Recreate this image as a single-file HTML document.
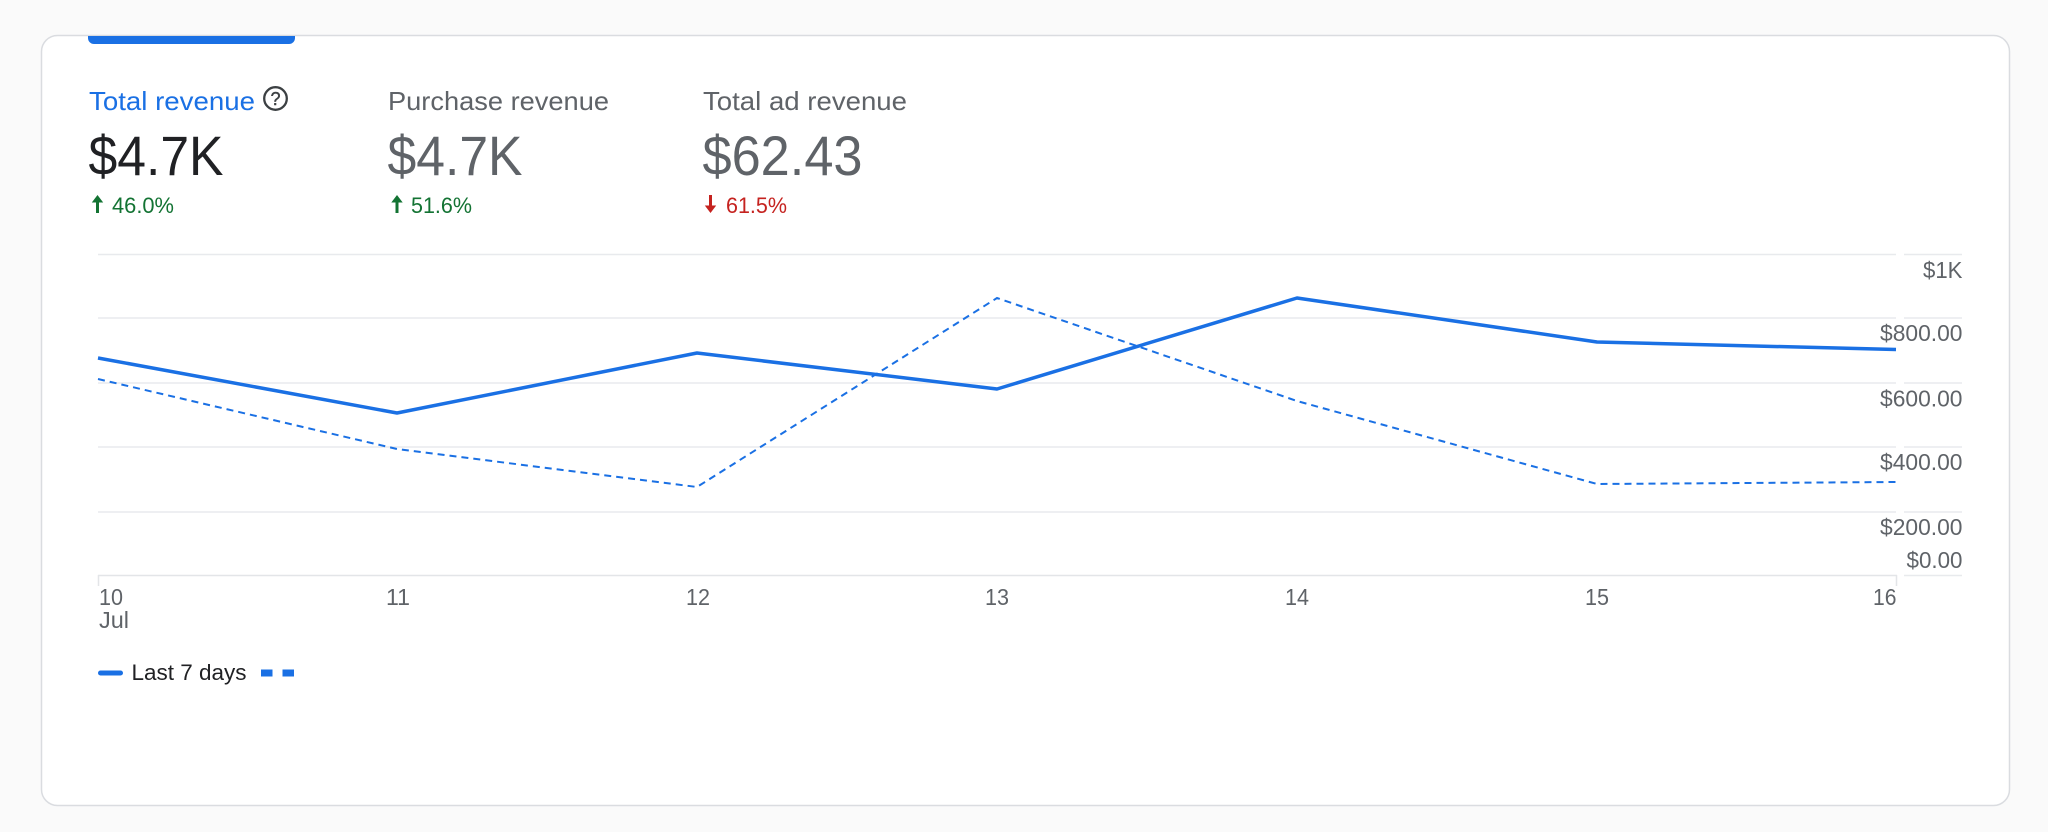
<!DOCTYPE html>
<html><head><meta charset="utf-8"><style>
html,body{margin:0;padding:0;background:#fafafa;width:2048px;height:832px;overflow:hidden}
svg{display:block}
text{font-family:"Liberation Sans",sans-serif}
.ax{font-size:23px;fill:#5f6368}
</style></head><body>
<svg width="2048" height="832" viewBox="0 0 2048 832" xmlns="http://www.w3.org/2000/svg">
<rect width="2048" height="832" fill="#fafafa"/>
<rect x="41.5" y="35.5" width="1968" height="770" rx="16" fill="#fff" stroke="#dadce0" stroke-width="1.5"/>
<path d="M88 36H295V38a6 6 0 0 1-6 6H94a6 6 0 0 1-6-6Z" fill="#1a70e4"/>

<text x="89" y="110" font-size="26" fill="#1a70e4" textLength="166" lengthAdjust="spacingAndGlyphs">Total revenue</text>
<circle cx="275.500" cy="98.500" r="11.300" fill="none" stroke="#3c4043" stroke-width="2.300"/>
<text x="275.500" y="105" font-size="18" fill="#3c4043" stroke="#3c4043" stroke-width="0.400" text-anchor="middle">?</text>
<text x="388" y="110" font-size="26" fill="#5f6368" textLength="221" lengthAdjust="spacingAndGlyphs">Purchase revenue</text>
<text x="703" y="110" font-size="26" fill="#5f6368" textLength="204" lengthAdjust="spacingAndGlyphs">Total ad revenue</text>

<text x="88.500" y="175" font-size="56" fill="#202124" textLength="135" lengthAdjust="spacingAndGlyphs">$4.7K</text>
<text x="387.500" y="175" font-size="56" fill="#5f6368" textLength="135" lengthAdjust="spacingAndGlyphs">$4.7K</text>
<text x="702.500" y="175" font-size="56" fill="#5f6368" textLength="160" lengthAdjust="spacingAndGlyphs">$62.43</text>

<path d="M97.500 195l5.700 7.500h-4.200V213h-3V202.500h-4.200Z" fill="#137333"/>
<text x="112" y="213" font-size="22.500" fill="#137333" textLength="62" lengthAdjust="spacingAndGlyphs">46.0%</text>
<path d="M397 195l5.700 7.500h-4.200V213h-3V202.500h-4.200Z" fill="#137333"/>
<text x="411" y="213" font-size="22.500" fill="#137333" textLength="61" lengthAdjust="spacingAndGlyphs">51.6%</text>
<path d="M710.500 213l-5.700-7.500h4.200V195h3v10.500h4.200Z" fill="#c5221f"/>
<text x="726" y="213" font-size="22.500" fill="#c5221f" textLength="61" lengthAdjust="spacingAndGlyphs">61.5%</text>

<g stroke="#e8eaed" stroke-width="1.500" fill="none">
<path d="M98 254.500H1896M1904 254.500H1962"/>
<path d="M98 318H1896M1904 318H1962"/>
<path d="M98 383H1896M1904 383H1962"/>
<path d="M98 447H1896M1904 447H1962"/>
<path d="M98 512H1896M1904 512H1962"/>
<path d="M1904 575.500H1962"/>
</g>
<path d="M98 575.500H1897M98.500 575V586M1896.500 575V586" stroke="#e3e5e8" stroke-width="1.500" fill="none"/>

<polyline points="98,379 397,449 697,487 997,298 1297,401 1597,484 1896,482" fill="none" stroke="#1a70e4" stroke-width="2" stroke-dasharray="7 5"/>
<polyline points="98,358 397,413 697,353 997,389 1297,298 1597,342 1896,349.500" fill="none" stroke="#1a70e4" stroke-width="3.500" stroke-linejoin="round"/>

<g class="ax">
<text x="1923" y="278" class="ax" textLength="39.500" lengthAdjust="spacingAndGlyphs">$1K</text>
<text x="1880" y="341" class="ax" textLength="82.500" lengthAdjust="spacingAndGlyphs">$800.00</text>
<text x="1880" y="406.500" class="ax" textLength="82.500" lengthAdjust="spacingAndGlyphs">$600.00</text>
<text x="1880" y="470" class="ax" textLength="82.500" lengthAdjust="spacingAndGlyphs">$400.00</text>
<text x="1880" y="535" class="ax" textLength="82.500" lengthAdjust="spacingAndGlyphs">$200.00</text>
<text x="1906.500" y="568" class="ax" textLength="56" lengthAdjust="spacingAndGlyphs">$0.00</text>
<text x="99" y="605" class="ax" textLength="24" lengthAdjust="spacingAndGlyphs">10</text>
<text x="99" y="628" class="ax" textLength="30" lengthAdjust="spacingAndGlyphs">Jul</text>
<text x="386" y="605" class="ax" textLength="24" lengthAdjust="spacingAndGlyphs">11</text>
<text x="686" y="605" class="ax" textLength="24" lengthAdjust="spacingAndGlyphs">12</text>
<text x="985" y="605" class="ax" textLength="24" lengthAdjust="spacingAndGlyphs">13</text>
<text x="1285" y="605" class="ax" textLength="24" lengthAdjust="spacingAndGlyphs">14</text>
<text x="1585" y="605" class="ax" textLength="24" lengthAdjust="spacingAndGlyphs">15</text>
<text x="1873" y="605" class="ax" textLength="23.500" lengthAdjust="spacingAndGlyphs">16</text>
</g>

<path d="M100.500 673H120.500" stroke="#1a70e4" stroke-width="5" stroke-linecap="round"/>
<text x="131.500" y="680" font-size="22" fill="#202124" textLength="115" lengthAdjust="spacingAndGlyphs">Last 7 days</text>
<rect x="261" y="669.500" width="11.500" height="7" fill="#1a70e4"/>
<rect x="282.500" y="669.500" width="11.500" height="7" fill="#1a70e4"/>
</svg>
</body></html>
